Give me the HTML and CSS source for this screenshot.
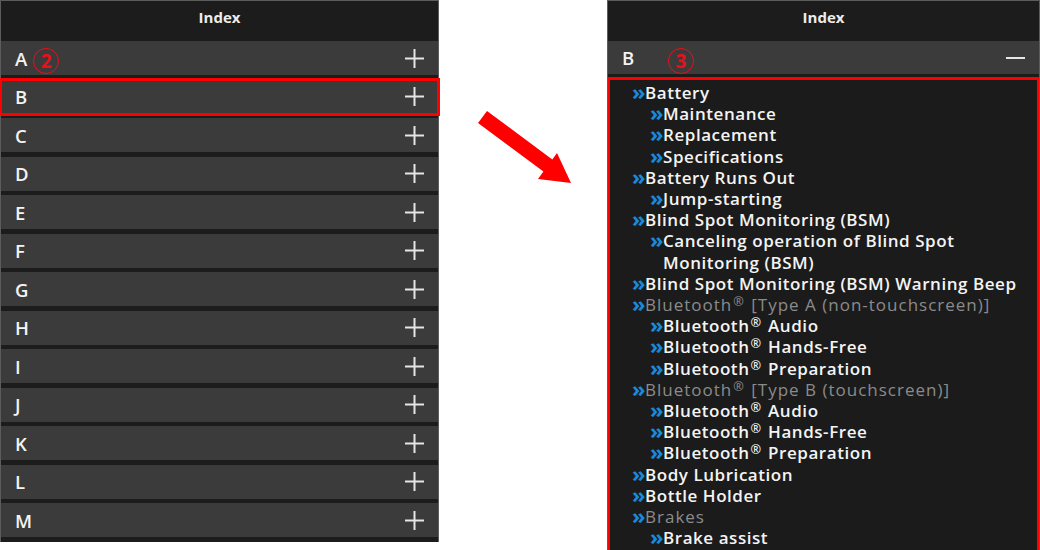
FILE: index.html
```html
<!DOCTYPE html>
<html lang="en">
<head>
<meta charset="utf-8">
<title>Index</title>
<link rel="stylesheet" href="styles.css">
</head>
<body>
<div class="page">
  <section class="panel panel-left">
    <header class="panel-title">Index</header>
    <ul class="letters">
      <li class="letter-row"><span class="letter">A</span><span class="callout">2</span><svg class="plus" viewBox="0 0 19 19"><path d="M0 9.5H19M9.5 0V19"/></svg></li>
      <li class="letter-row is-selected"><span class="letter">B</span><svg class="plus" viewBox="0 0 19 19"><path d="M0 9.5H19M9.5 0V19"/></svg></li>
      <li class="letter-row"><span class="letter">C</span><svg class="plus" viewBox="0 0 19 19"><path d="M0 9.5H19M9.5 0V19"/></svg></li>
      <li class="letter-row"><span class="letter">D</span><svg class="plus" viewBox="0 0 19 19"><path d="M0 9.5H19M9.5 0V19"/></svg></li>
      <li class="letter-row"><span class="letter">E</span><svg class="plus" viewBox="0 0 19 19"><path d="M0 9.5H19M9.5 0V19"/></svg></li>
      <li class="letter-row"><span class="letter">F</span><svg class="plus" viewBox="0 0 19 19"><path d="M0 9.5H19M9.5 0V19"/></svg></li>
      <li class="letter-row"><span class="letter">G</span><svg class="plus" viewBox="0 0 19 19"><path d="M0 9.5H19M9.5 0V19"/></svg></li>
      <li class="letter-row"><span class="letter">H</span><svg class="plus" viewBox="0 0 19 19"><path d="M0 9.5H19M9.5 0V19"/></svg></li>
      <li class="letter-row"><span class="letter">I</span><svg class="plus" viewBox="0 0 19 19"><path d="M0 9.5H19M9.5 0V19"/></svg></li>
      <li class="letter-row"><span class="letter">J</span><svg class="plus" viewBox="0 0 19 19"><path d="M0 9.5H19M9.5 0V19"/></svg></li>
      <li class="letter-row"><span class="letter">K</span><svg class="plus" viewBox="0 0 19 19"><path d="M0 9.5H19M9.5 0V19"/></svg></li>
      <li class="letter-row"><span class="letter">L</span><svg class="plus" viewBox="0 0 19 19"><path d="M0 9.5H19M9.5 0V19"/></svg></li>
      <li class="letter-row"><span class="letter">M</span><svg class="plus" viewBox="0 0 19 19"><path d="M0 9.5H19M9.5 0V19"/></svg></li>
    </ul>
  </section>

  <div class="gutter">
    <svg class="arrow" viewBox="0 0 110 95"><polygon points="17,11 82.3,59.4 87,53 101,83 68,79 73.4,71.6 8,23"/></svg>
  </div>

  <section class="panel panel-right">
    <header class="panel-title">Index</header>
    <div class="letter-row is-open"><span class="letter">B</span><span class="callout callout-float">3</span><svg class="minus" viewBox="0 0 19 4"><path d="M0 2H19"/></svg></div>
    <ul class="topics">
      <li class="topic">Battery</li>
      <li class="topic sub">Maintenance</li>
      <li class="topic sub">Replacement</li>
      <li class="topic sub">Specifications</li>
      <li class="topic">Battery Runs Out</li>
      <li class="topic sub">Jump-starting</li>
      <li class="topic">Blind Spot Monitoring (BSM)</li>
      <li class="topic sub">Canceling operation of Blind Spot Monitoring (BSM)</li>
      <li class="topic">Blind Spot Monitoring (BSM) Warning Beep</li>
      <li class="topic muted">Bluetooth<sup class="reg">®</sup> [Type A (non-touchscreen)]</li>
      <li class="topic sub">Bluetooth<sup class="reg">®</sup> Audio</li>
      <li class="topic sub">Bluetooth<sup class="reg">®</sup> Hands-Free</li>
      <li class="topic sub">Bluetooth<sup class="reg">®</sup> Preparation</li>
      <li class="topic muted">Bluetooth<sup class="reg">®</sup> [Type B (touchscreen)]</li>
      <li class="topic sub">Bluetooth<sup class="reg">®</sup> Audio</li>
      <li class="topic sub">Bluetooth<sup class="reg">®</sup> Hands-Free</li>
      <li class="topic sub">Bluetooth<sup class="reg">®</sup> Preparation</li>
      <li class="topic">Body Lubrication</li>
      <li class="topic">Bottle Holder</li>
      <li class="topic muted">Brakes</li>
      <li class="topic sub">Brake assist</li>
    </ul>
  </section>
</div>
</body>
</html>
```

FILE: styles.css
```css
* { box-sizing: border-box; }

html, body {
  margin: 0;
  padding: 0;
  background: #ffffff;
}

body {
  font-family: "Open Sans", "DejaVu Sans", sans-serif;
  color: #f2f2f2;
}

.page {
  display: flex;
  align-items: flex-start;
  width: 1040px;
  height: 550px;
  overflow: hidden;
}

.panel {
  position: relative;
  background: #1c1c1c;
  border: 1px solid #5c5c5c;
  border-bottom: none;
}

.panel-left {
  width: 439px;
  height: 542px;
  padding-bottom: 5px;
}

.panel-right {
  width: 433px;
  height: 550px;
  overflow: hidden;
}

.panel-title {
  height: 40px;
  padding-top: 6px;
  line-height: 20px;
  text-align: center;
  font-size: 15px;
  font-weight: 700;
  color: #ececec;
}

.letters {
  list-style: none;
  margin: 0;
  padding: 0;
  display: flex;
  flex-direction: column;
  gap: 4.5px;
}

.letter-row {
  display: flex;
  align-items: center;
  height: 34px;
  padding: 0 14px 0 14px;
  background: #3b3b3b;
}

.letter-row.is-selected {
  outline: 3px solid #ff0000;
  outline-offset: -1px;
}

.letter-row.is-open {
  height: 33px;
}

.letter {
  font-size: 18.5px;
  font-weight: 600;
  color: #f4f4f4;
}

.plus, .minus {
  margin-left: auto;
  width: 19px;
  stroke: #e6e6e6;
  stroke-width: 2;
  fill: none;
}

.plus { height: 19px; }
.minus { height: 4px; }

.callout {
  display: inline-flex;
  align-items: center;
  justify-content: center;
  width: 26px;
  height: 26px;
  margin-left: 6px;
  margin-top: 6px;
  border: 1.6px solid #e8101a;
  border-radius: 50%;
  color: #e8101a;
  font-size: 19px;
  font-weight: 700;
  line-height: 1;
}

.callout-float {
  position: absolute;
  left: 60px;
  top: 47px;
  margin: 0;
}

.gutter {
  width: 168px;
  height: 550px;
  display: flex;
  align-items: flex-start;
  padding: 100px 0 0 31px;
}

.arrow {
  width: 110px;
  height: 95px;
  fill: #ff0000;
}

.topics {
  list-style: none;
  margin: 3px -1px 0;
  padding: 2px 6px 6px 0;
  border: 3px solid #ff0000;
  background: #1b1b1b;
  min-height: 480px;
}

.topic {
  padding-left: 35px;
  text-indent: -13px;
  font-size: 17px;
  font-weight: 600;
  letter-spacing: 0.55px;
  line-height: 21.2px;
  color: #f4f4f4;
}

.topic::before {
  content: "»";
  display: inline-block;
  width: 13px;
  text-indent: 0;
  letter-spacing: 0;
  font-size: 22px;
  line-height: 10px;
  color: #1a8ad8;
  font-weight: 700;
  vertical-align: -1px;
}

.topic.sub {
  padding-left: 53px;
}

.topic.muted {
  color: #8b8b8b;
  font-weight: 500;
  letter-spacing: 1px;
}

.reg {
  display: inline-block;
  text-indent: 0;
  font-size: 0.75em;
  line-height: 12px;
  height: 12px;
  letter-spacing: 0;
  vertical-align: top;
  margin: 1px 2px 0 1px;
}
```
